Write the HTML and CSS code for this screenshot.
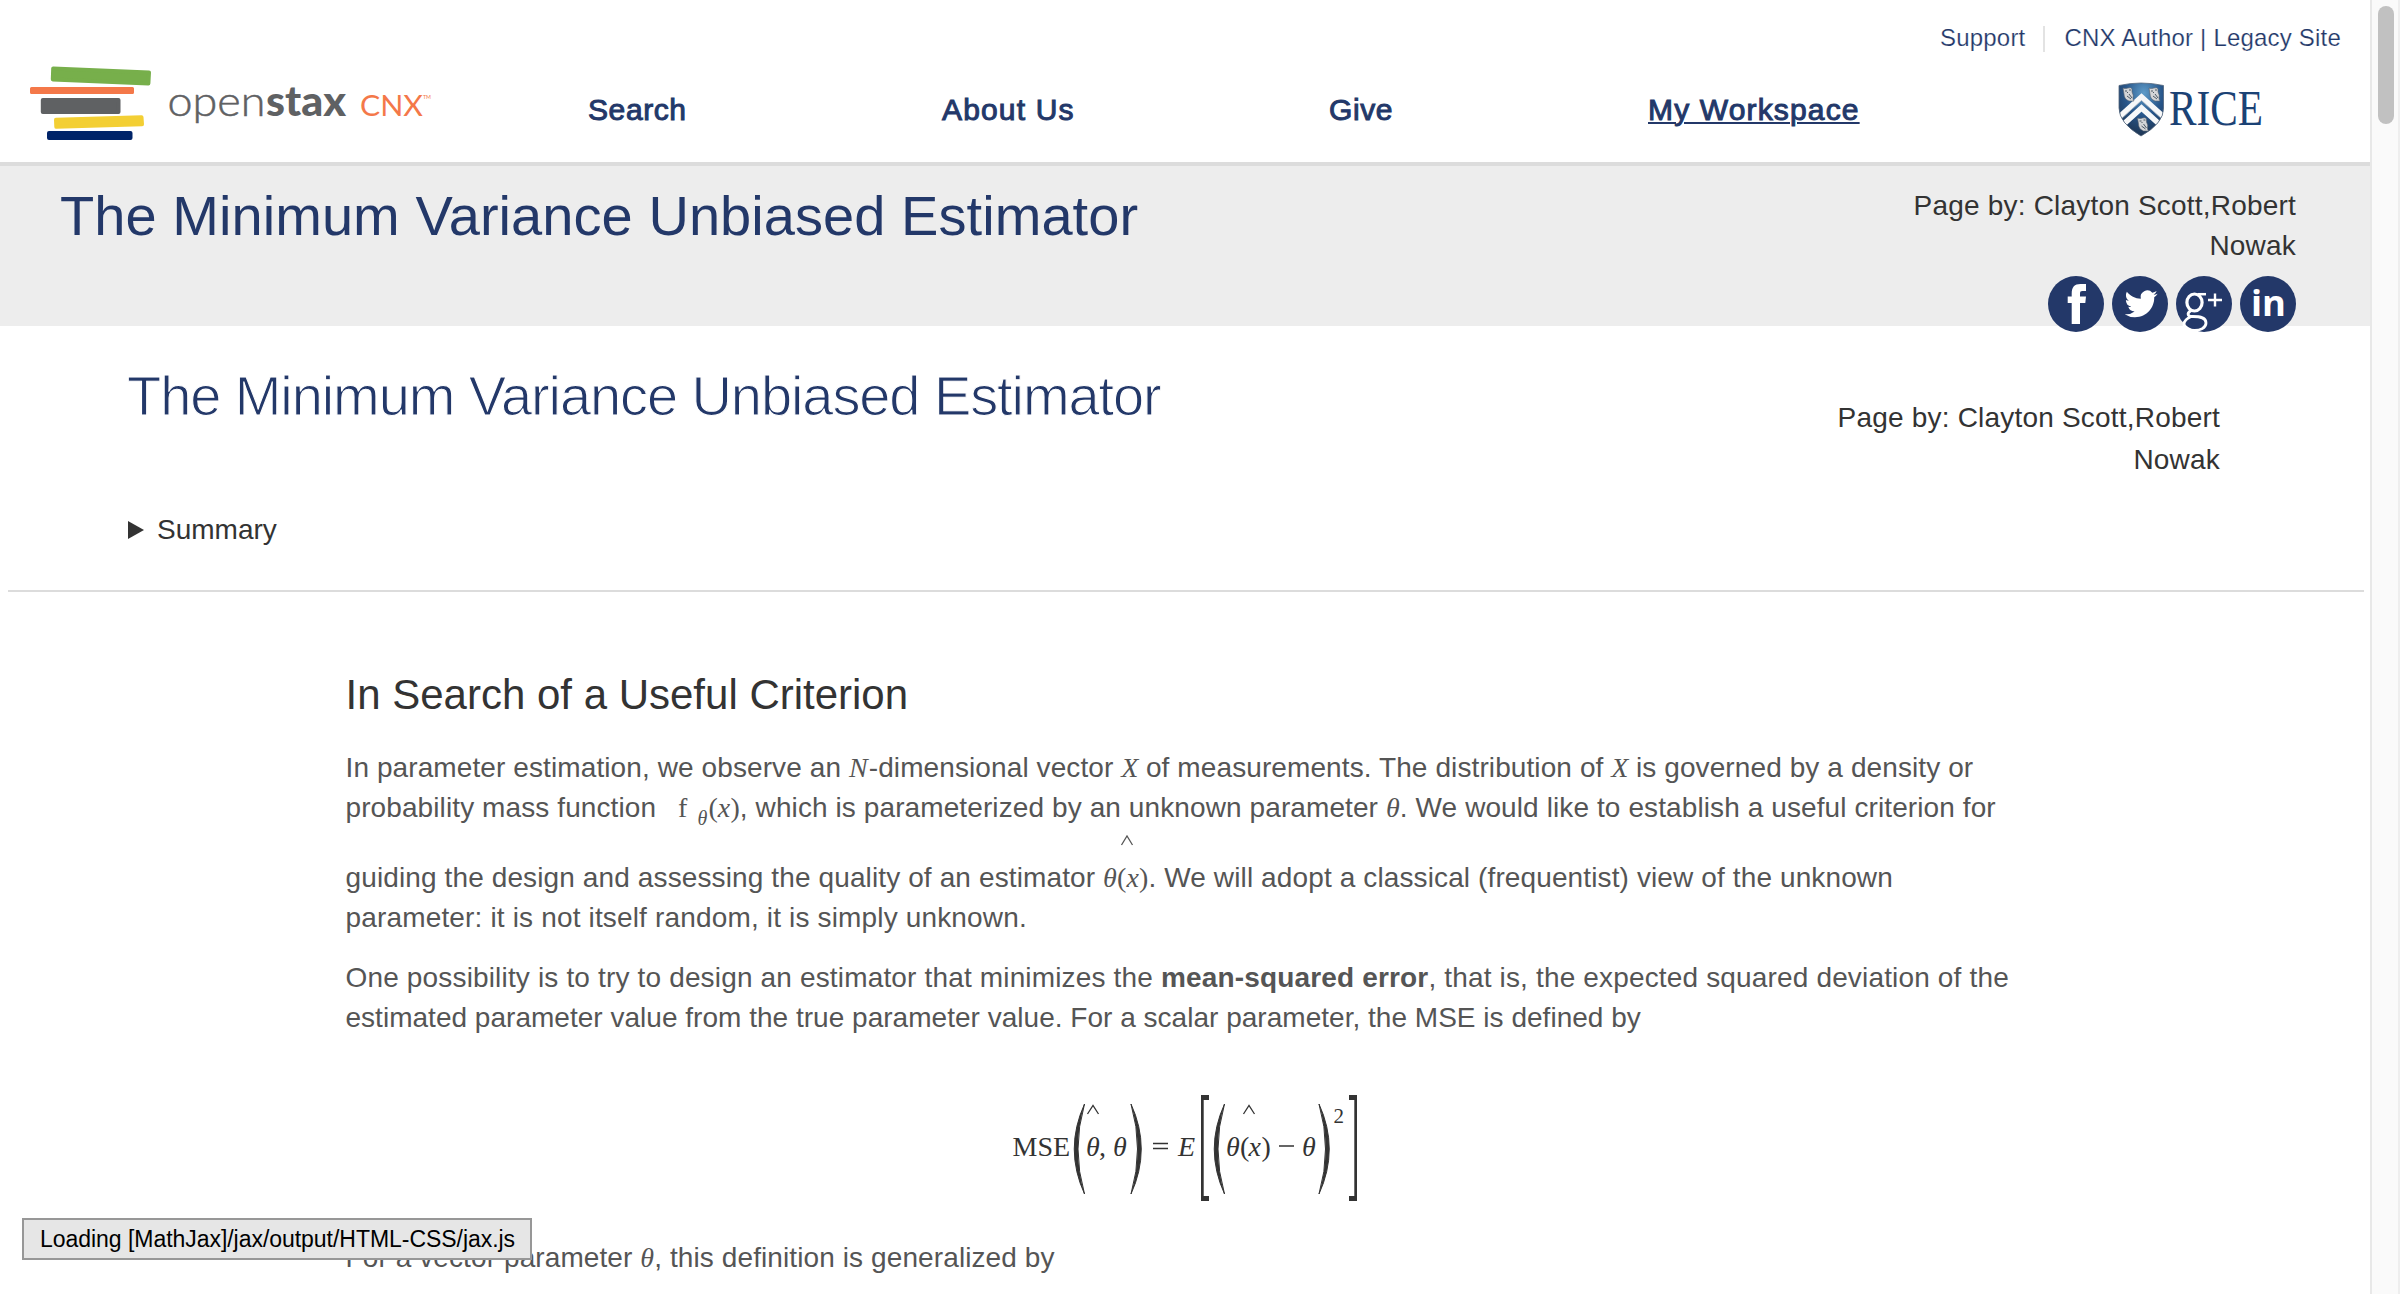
FILE: index.html
```html
<!DOCTYPE html>
<html lang="en">
<head>
<meta charset="utf-8">
<title>The Minimum Variance Unbiased Estimator - OpenStax CNX</title>
<link rel="stylesheet" href="styles.css">
</head>
<body>
<div class="page">
  <header class="site-header">
    <a class="logo" href="#">
      <svg width="410" height="80" viewBox="28 64 410 80">
        <g stroke-linejoin="round" stroke-width="4">
          <path d="M53.2 68.4 149 72.4 148.4 83.4 52.8 79.4Z" fill="#77af4b" stroke="#77af4b"/>
          <path d="M31.5 88.5H132.5V92.5H31.5Z" fill="#f47849" stroke="#f47849" stroke-width="3"/>
          <path d="M42.8 100H118.5V112H42.8Z" fill="#5f6163" stroke="#5f6163"/>
          <path d="M56 119.8 141.5 117.2 142 124.3 56.3 126.8Z" fill="#f3cf34" stroke="#f3cf34"/>
          <path d="M49 133H130.500V138H49Z" fill="#002469" stroke="#002469"/>
        </g>
        <text class="logo-open" x="167.500" y="116" textLength="98" lengthAdjust="spacingAndGlyphs">open</text>
        <text class="logo-stax" x="266" y="116" textLength="80" lengthAdjust="spacingAndGlyphs">stax</text>
        <text class="logo-cnx" x="360" y="115.500" textLength="63" lengthAdjust="spacingAndGlyphs">CNX</text>
        <text class="logo-tm" x="423" y="99" textLength="8" lengthAdjust="spacingAndGlyphs">TM</text>
      </svg>
    </a>
    <div class="header-main">
      <div class="top-links"><a href="#">Support</a><a class="legacy" href="#">CNX Author | Legacy Site</a></div>
      <nav class="nav">
        <a class="search" href="#">Search</a>
        <a class="about" href="#">About Us</a>
        <a class="give" href="#">Give</a>
        <a class="workspace" href="#">My Workspace</a>
        <svg class="rice" width="156" height="70" viewBox="2118 82 156 70">
          <defs>
            <radialGradient id="sh" cx=".55" cy=".2" r=".8"><stop offset="0" stop-color="#5f9cc9"/><stop offset=".5" stop-color="#28568a"/><stop offset="1" stop-color="#1d3350"/></radialGradient>
            <clipPath id="shc"><path d="M2119 85.500Q2141 80.500 2163.500 85.500V108Q2164 123 2141 136Q2119 123 2119 108Z"/></clipPath>
            <g id="owl"><path d="M-5-6Q-3-5 0-6Q3-7 4-5L4-2Q6 1 5 5L6 7 1 7Q-4 5-4 0Z" fill="#d3d5d8" stroke="#59626c" stroke-width=".6"/><path d="M-3-3H-1M1-4H3M-1-2 0-1M-1 2 3 5M1 0 4 4" stroke="#3c4957" stroke-width=".9"/></g>
          </defs>
          <g clip-path="url(#shc)">
            <path d="M2118 82H2165V137H2118Z" fill="url(#sh)"/>
            <path d="M2116 120 2141.500 97 2167 120M2121 126.500 2141.500 108 2162 126.500" fill="none" stroke="#f7f8f9" stroke-width="5.500"/>
            <path d="M2116 123.500 2141.500 100.500 2167 123.500" fill="none" stroke="#97a5b5" stroke-width=".8"/>
            <use href="#owl" x="2128" y="94"/><use href="#owl" x="2154" y="94"/><use href="#owl" x="2142.500" y="124"/>
          </g>
          <path d="M2119 85.500Q2141 80.500 2163.500 85.500V108Q2164 123 2141 136Q2119 123 2119 108Z" fill="none" stroke="#50637a" stroke-width=".8"/>
          <text class="rice-name" x="2169" y="125" textLength="94" lengthAdjust="spacingAndGlyphs">RICE</text>
        </svg>
      </nav>
    </div>
  </header>

  <section class="band">
    <h1 class="band-title">The Minimum Variance Unbiased Estimator</h1>
    <div class="band-side">
      <div class="authors">Page by: Clayton Scott,Robert<br>Nowak</div>
      <div class="social">
        <svg viewBox="0 0 56 56"><circle cx="28" cy="28" r="28"/><path d="M23.700 48V27H19.700V20.500H23.700V17.500C23.700 11 26.500 8 32.500 8H38V15H34.500C32.500 15 32 15.800 32 17.500V20.500H38L37.300 27H32V48Z" fill="#fff"/></svg>
        <svg viewBox="0 0 56 56"><circle cx="28" cy="28" r="28"/><path transform="translate(12.600 11.400) scale(1.375)" fill="#fff" d="M23.953 4.570a10 10 0 01-2.825.775 4.958 4.958 0 002.163-2.723c-.951.555-2.005.959-3.127 1.184a4.920 4.920 0 00-8.384 4.482C7.690 8.095 4.067 6.130 1.640 3.162a4.822 4.822 0 00-.666 2.475c0 1.710.870 3.213 2.188 4.096a4.904 4.904 0 01-2.228-.616v.060a4.923 4.923 0 003.946 4.827 4.996 4.996 0 01-2.212.085 4.936 4.936 0 004.604 3.417 9.867 9.867 0 01-6.102 2.105c-.390 0-.779-.023-1.170-.067a13.995 13.995 0 007.557 2.209c9.053 0 13.998-7.496 13.998-13.985 0-.210 0-.420-.015-.630A9.935 9.935 0 0024 4.590z"/></svg>
        <svg viewBox="0 0 56 56"><circle cx="28" cy="28" r="28"/><g fill="none" stroke="#fff"><ellipse cx="18.500" cy="26.500" rx="7.600" ry="8.500" stroke-width="3.200"/><path d="M22 18.200H30" stroke-width="2.500"/><path d="M15 34.500C10 38 12 40.500 17 40.500C25 40.500 30 42 30 47C30 52 24 54.500 18.500 54.500C12 54.500 8 51.500 8 48C8 44.500 11 42.500 15 40.500" stroke-width="2.800"/><path d="M32 24H46M39 17.500V30.500" stroke-width="2.400"/></g></svg>
        <svg viewBox="0 0 56 56"><circle cx="28" cy="28" r="28"/><text class="in" x="11" y="40" textLength="35" lengthAdjust="spacingAndGlyphs">in</text></svg>
      </div>
    </div>
  </section>

  <section class="intro">
    <div class="intro-row">
      <h2 class="intro-title">The Minimum Variance Unbiased Estimator</h2>
      <div class="authors intro-authors">Page by: Clayton Scott,Robert<br>Nowak</div>
    </div>
    <div class="summary"><svg width="18" height="18" viewBox="0 0 18 18"><path d="M1 0 17 9 1 18Z" fill="#333"/></svg>Summary</div>
  </section>

  <main class="content">
    <h3>In Search of a Useful Criterion</h3>
    <p>
      <span class="line">In parameter estimation, we observe an <i class="n">N</i>-dimensional vector <i class="x">X</i> of measurements. The distribution of <i class="x">X</i> is governed by a density or</span>
      <span class="line">probability mass function <span class="f">f</span><i class="sub">θ</i><span class="paren">(<i>x</i>)</span>, which is parameterized by an unknown parameter <i>θ</i>. We would like to establish a useful criterion for</span>
      <span class="line tall">guiding the design and assessing the quality of an estimator <span class="hatted"><i>θ</i>(<i>x</i>)<svg class="hat" width="14" height="11" viewBox="0 0 14 11"><path d="M1.500 10 7 1 12.500 10" fill="none" stroke="#555" stroke-width="1.300"/></svg></span>. We will adopt a classical (frequentist) view of the unknown</span>
      <span class="line wide">parameter: it is not itself random, it is simply unknown.</span>
    </p>
    <p>
      <span class="line wide">One possibility is to try to design an estimator that minimizes the <b>mean-squared error</b>, that is, the expected squared deviation of the</span>
      <span class="line snug">estimated parameter value from the true parameter value. For a scalar parameter, the MSE is defined by</span>
    </p>
    <svg class="equation" width="360" height="120" viewBox="1006 1090 360 120">
      <g fill="#333">
        <text x="1012.500" y="1156.500">MSE</text>
        <path d="M1084.500 1105Q1064 1150 1084.500 1195Q1071.500 1150 1084.500 1105Z" stroke="#333"/>
        <text class="it" x="1086" y="1156.500">θ</text><text x="1099" y="1156.500">,</text><text class="it" x="1113" y="1156.500">θ</text>
        <path d="M1131 1105Q1151.500 1150 1131 1195Q1144 1150 1131 1105Z" stroke="#333"/>
        <path d="M1153 1144.500H1168M1153 1149.500H1168M1279 1147H1294" stroke="#333" stroke-width="1.300"/>
        <text class="it" x="1178" y="1156.500">E</text>
        <path d="M1201 1096H1209V1101H1203.700V1197H1209V1202H1201ZM1357 1096H1349V1101H1354.300V1197H1349V1202H1357Z"/>
        <path d="M1224.500 1105Q1204 1150 1224.500 1195Q1211.500 1150 1224.500 1105Z" stroke="#333"/>
        <text class="it" x="1226" y="1156.500">θ</text><text x="1240" y="1156.500">(</text><text class="it" x="1248.500" y="1156.500">x</text><text x="1261.500" y="1156.500">)</text><text class="it" x="1302" y="1156.500">θ</text>
        <path d="M1319 1105Q1339.500 1150 1319 1195Q1332 1150 1319 1105Z" stroke="#333"/>
        <text class="sup" x="1333.500" y="1124">2</text>
        <path d="M1087.500 1115 1093 1106.500 1098.500 1115M1243.500 1115 1249 1106.500 1254.500 1115" fill="none" stroke="#333" stroke-width="1.300"/>
      </g>
    </svg>
    <p><span class="line">For a vector parameter <i>θ</i>, this definition is generalized by</span></p>
  </main>
</div>
<div class="scrollbar"><div class="thumb"></div></div>
<div class="message">Loading [MathJax]/jax/output/HTML-CSS/jax.js</div>
</body>
</html>
```
FILE: styles.css
```css
* { box-sizing: border-box; }
html, body { margin: 0; height: 1294px; overflow: hidden; }
body {
  display: flex;
  background: #fff;
  color: #333;
  font-family: "Liberation Sans", Arial, sans-serif;
  font-size: 28px;
}
h1, h2, h3, p { margin: 0; font-weight: 400; }
a { color: #233869; text-decoration: none; }

.page { width: 2370px; height: 1294px; overflow: hidden; }

.site-header {
  display: flex;
  height: 166px;
  border-bottom: 4px solid #dcdcdc;
}
.logo { padding: 64px 0 0 28px; width: 588px; }
.logo svg, .rice, .social svg, .equation { display: block; }
.logo-open, .logo-stax { font-family: Lato, sans-serif; font-size: 41px; fill: #5f6163; }
.logo-open { font-weight: 300; stroke: #5f6163; stroke-width: .5px; }
.logo-stax { font-weight: 900; }
.logo-cnx { font: 400 28.500px Lato, sans-serif; fill: #f47849; }
.logo-tm { font: 6px Lato, sans-serif; fill: #f47849; }

.header-main { flex: 1; }
.top-links {
  display: flex;
  justify-content: flex-end;
  height: 53px;
  padding: 23px 29px 0 0;
  font-size: 24px;
  line-height: 30px;
  letter-spacing: .2px;
}
.top-links a { -webkit-text-stroke: .2px #fff; }
.top-links .legacy {
  height: 26px;
  margin: 3px 0 0 18px;
  padding-left: 19px;
  border-left: 2px solid #e3e3e3;
  line-height: 24px;
}

.nav {
  display: flex;
  height: 109px;
  padding-top: 29px;
  font-size: 30px;
  line-height: 55px;
  -webkit-text-stroke: 1px #233869;
}
.search { width: 354px; letter-spacing: .6px; }
.about { width: 387px; letter-spacing: 1.150px; }
.give { width: 319px; letter-spacing: .6px; }
.nav .workspace {
  width: 470px;
  letter-spacing: 1.150px;
  text-decoration: underline;
  text-decoration-thickness: 2px;
  text-underline-offset: 2px;
}
.rice { -webkit-text-stroke: 0; }
.rice-name { font-family: "Liberation Serif", serif; font-size: 50px; fill: #1b4275; }

.band {
  display: flex;
  justify-content: space-between;
  height: 160px;
  padding: 20px 74px 0 60px;
  background: #ededed;
}
.band-title { color: #233869; font-size: 56px; line-height: 60px; letter-spacing: .06px; }
.authors { text-align: right; line-height: 40px; letter-spacing: .2px; }
.social { display: flex; justify-content: flex-end; gap: 8px; margin-top: 10px; }
.social svg { width: 56px; height: 56px; fill: #233869; }
.social .in { font: 700 36px "Open Sans", sans-serif; fill: #fff; }

.intro {
  height: 266px;
  margin: 0 6px 0 8px;
  padding: 40px 144px 0 119px;
  border-bottom: 2px solid #dcdcdc;
}
.intro-row { display: flex; justify-content: space-between; height: 144px; }
.intro-title { color: #233869; font-size: 56px; line-height: 60px; letter-spacing: -1.080px; -webkit-text-stroke: 1.100px #fff; }
.intro-authors { padding-top: 31px; line-height: 42px; }
.summary { display: flex; align-items: center; gap: 12px; line-height: 40px; }

.content { padding: 73px 0 0 345.500px; color: #555; }
h3 { color: #333; font-size: 42px; line-height: 60px; margin-bottom: 23px; }
p { margin-bottom: 20px; }
.line { display: block; height: 40px; line-height: 40px; white-space: nowrap; letter-spacing: .1px; }
.line.wide { letter-spacing: .160px; }
.line.snug { letter-spacing: .020px; }
.line.tall { height: 70px; padding-top: 30px; letter-spacing: .12px; }
.line i, .f, .paren, .hatted { font-family: "Liberation Serif", serif; line-height: 1; }
.line .n { margin: 0 1px 0 0; }
.line .x { margin: 0 -.500px 0 0; }
.f { margin: 0 10px 0 14px; }
.line .sub { font-size: 20px; position: relative; top: 8px; }
.paren { margin-left: 1px; }
.hatted { position: relative; }
.hat { position: absolute; left: 17px; top: -27px; }

.equation { margin: 51px 0 29px 660.500px; }
.equation text { font: 28px "Liberation Serif", serif; }
.equation .it { font-style: italic; }
.equation .sup { font-size: 21px; }

.scrollbar { width: 30px; padding: 6px 0 0 6px; background: #fafafa; border-left: 2px solid #e8e8e8; border-right: 2px solid #eee; }
.thumb { width: 16px; height: 118px; border-radius: 8px; background: #c1c1c1; }

.message {
  position: absolute;
  left: 22px;
  top: 1218px;
  width: 510px;
  height: 42px;
  padding-left: 16px;
  border: 2px solid #979797;
  background: #e6e6e6;
  color: #000;
  font-size: 23px;
  letter-spacing: -.040px;
  line-height: 38px;
  white-space: nowrap;
}
```
